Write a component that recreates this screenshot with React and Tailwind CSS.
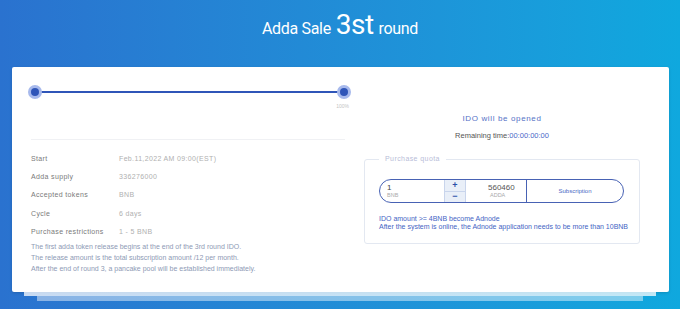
export default function App() {
  const rows = [
    ['Start', 'Feb.11,2022 AM 09:00(EST)'],
    ['Adda supply', '336276000'],
    ['Accepted tokens', 'BNB'],
    ['Cycle', '6 days'],
    ['Purchase restrictions', '1 - 5 BNB'],
  ]

  return (
    <div className="w-[680px] h-[309px] overflow-hidden bg-linear-to-r from-[#2a72cf] to-[#0fa8de] font-['Liberation_Sans',Arial,sans-serif]">
      <div className="h-[67px] flex justify-center items-baseline gap-[5px] pt-[6px] text-white font-['Roboto',sans-serif]">
        <span className="text-[16px] leading-[38px] tracking-[-0.02em]">Adda Sale</span>
        <span className="text-[28px] leading-[38px] tracking-[-0.02em]">3st</span>
        <span className="text-[16px] leading-[38px] tracking-[-0.02em]">round</span>
      </div>

      <div className="mx-[12px] w-[657px] h-[225px] bg-white rounded-[2px] shadow-[0_1px_3px_rgba(0,0,0,0.15)] flex pl-[19px]">
        {/* left */}
        <div className="w-[314px]">
          <div className="mt-[18px] -ml-[3px] w-[323px] relative h-[14px] flex items-center">
            <div className="absolute left-[4px] right-[4px] h-[2px] bg-[#2f55b8]" />
            <Dot />
            <div className="flex-1" />
            <Dot />
          </div>
          <div className="mt-[4px] -ml-[3px] w-[321px] text-right text-[5px] leading-[6px] text-[#c4c4c4]">100%</div>
          <div className="mt-[30px] h-px bg-[#f0f1f4]" />
          <div className="mt-[10px]">
            {rows.map(([k, v]) => (
              <div key={k} className="h-[18.25px] flex items-center text-[7px] tracking-[0.05em]">
                <span className="w-[88px] text-[#7a7a7a]">{k}</span>
                <span className="text-[#b0b0b0]">{v}</span>
              </div>
            ))}
          </div>
          <div className="text-[7px] leading-[11px] text-[#8e9ab5]">
            <div>The first adda token release begins at the end of the 3rd round IDO.</div>
            <div>The release amount is the total subscription amount /12 per month.</div>
            <div>After the end of round 3, a pancake pool will be established immediately.</div>
          </div>
        </div>

        {/* right */}
        <div className="ml-[19px] w-[276px]">
          <div className="mt-[46px] text-center text-[8px] leading-[12px] tracking-[0.08em] text-[#5572c6]">IDO will be opened</div>
          <div className="mt-[5px] text-center text-[7.5px] leading-[12px] text-[#555]">
            Remaining time:<span className="text-[#4a68c8]">00:00:00:00</span>
          </div>
          <fieldset className="mt-[13px] border border-[#e3e8f1] rounded-[3px] pb-[12px]">
            <legend className="ml-[14px] px-[6px] text-[7px] leading-[8px] tracking-[0.06em] text-[#b8bdd8]">Purchase quota</legend>
            <div className="mt-[16px] ml-[14px] w-[245px] h-[24px] rounded-full border border-[#4862b4] flex overflow-hidden">
              <div className="w-[64px] pl-[7px] flex flex-col justify-center">
                <span className="text-[8px] leading-[9px] text-[#444]">1</span>
                <span className="text-[5.5px] leading-[7px] text-[#aaa]">BNB</span>
              </div>
              <div className="w-[22px] flex flex-col bg-[#e9eff8] border-x border-[#c9d5ec]">
                <div className="flex-1 flex items-center justify-center text-[9px] leading-none font-bold text-[#2c4fa8] border-b border-[#c9d5ec]">+</div>
                <div className="flex-1 flex items-center justify-center text-[9px] leading-none font-bold text-[#2c4fa8]">−</div>
              </div>
              <div className="w-[61px] pl-[22px] flex flex-col justify-center border-r border-[#4862b4]">
                <span className="text-[8px] leading-[9px] text-[#555]">560460</span>
                <span className="text-[5.5px] leading-[7px] text-[#aaa] pl-[2px]">ADDA</span>
              </div>
              <div className="flex-1 flex items-center justify-center text-[6px] text-[#4a68c4]">Subscription</div>
            </div>
            <div className="mt-[12px] ml-[14px] text-[7px] leading-[8px] text-[#4464c4]">
              <div>IDO amount &gt;= 4BNB become Adnode</div>
              <div>After the system is online, the Adnode application needs to be more than 10BNB</div>
            </div>
          </fieldset>
        </div>
      </div>
      <div className="mx-[24px] h-[4px] bg-white/75" />
      <div className="mx-[37px] h-[5px] bg-white/45" />
    </div>
  )
}

function Dot() {
  return (
    <span className="relative w-[14px] h-[14px] rounded-full bg-[#a7b9ec] flex items-center justify-center">
      <span className="w-[8px] h-[8px] rounded-full bg-[#2f55b8]" />
    </span>
  )
}
